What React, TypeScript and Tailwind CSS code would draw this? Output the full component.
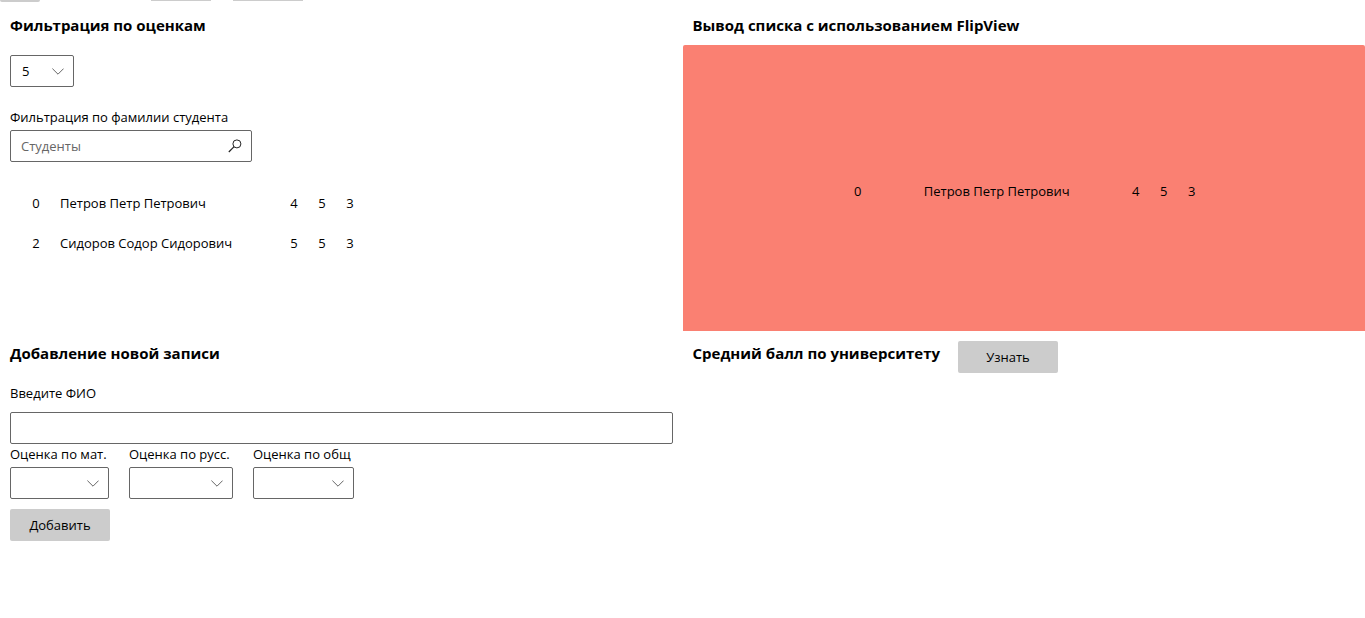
import { useState } from 'react';

type Student = { id: number; name: string; grades: number[] };

const students: Student[] = [
  { id: 0, name: 'Петров Петр Петрович', grades: [4, 5, 3] },
  { id: 2, name: 'Сидоров Содор Сидорович', grades: [5, 5, 3] },
];

const field = 'h-8 rounded-[2px] border border-[#666] bg-white outline-none';
const button = 'h-8 w-[100px] rounded-[2px] bg-[#ccc] text-center';
const heading = 'text-[15px] font-bold leading-5';

function GradeSelect({ id, label, value = '' }: { id: string; label?: string; value?: string }) {
  const [grade, setGrade] = useState(value);
  return (
    <div className="grid w-full grid-cols-1">
      <select
        id={id}
        aria-label={label}
        value={grade}
        onChange={(e) => setGrade(e.target.value)}
        className={`${field} col-start-1 row-start-1 w-full min-w-0 appearance-none pl-[11px]`}
      >
        <option value=""></option>
        <option>2</option>
        <option>3</option>
        <option>4</option>
        <option>5</option>
      </select>
      <svg
        viewBox="0 0 12 7"
        className="pointer-events-none col-start-1 row-start-1 mr-[10px] h-[7px] w-3 self-center justify-self-end"
        fill="none"
        stroke="#666"
      >
        <path d="M0.4 0.6 6 6.2 11.6 0.6" />
      </svg>
    </div>
  );
}

function LabeledGrade({ id, label, width }: { id: string; label: string; width: string }) {
  return (
    <div className={width}>
      <label htmlFor={id} className="block h-[23px] whitespace-nowrap leading-5">
        {label}
      </label>
      <GradeSelect id={id} />
    </div>
  );
}

function StudentTable({ rows, centered = false }: { rows: Student[]; centered?: boolean }) {
  return (
    <table className="table-fixed border-collapse">
      <tbody>
        {rows.map((s) => (
          <tr key={s.id} className="h-10">
            <td className="w-7 text-center">{s.id}</td>
            <td className={centered ? 'w-[250px] text-center' : 'w-[230px] pl-[10px]'}>{s.name}</td>
            {s.grades.map((g, i) => (
              <td key={i} className="w-7 text-center">
                {g}
              </td>
            ))}
          </tr>
        ))}
      </tbody>
    </table>
  );
}

export default function App() {
  const [query, setQuery] = useState('');
  const [name, setName] = useState('');

  return (
    <main className="grid min-h-screen grid-cols-2 grid-rows-[auto_1fr] bg-white font-['Open_Sans','Noto_Sans',sans-serif] text-[13px] leading-5 text-black">
      <section className="flex flex-col">
        <div className="flex h-[2px] items-start">
          <div className="h-[2px] w-10 rounded-b-[2px] bg-[#ccc]" />
          <div className="ml-[111px] h-px w-[60px] bg-[#ccc]" />
          <div className="ml-[22px] h-px w-[70px] bg-[#ccc]" />
        </div>
        <div className="px-[10px] pt-[13px]">
          <h2 className={heading}>Фильтрация по оценкам</h2>
          <div className="mt-5 w-16">
            <GradeSelect id="filter" label="Оценка" value="5" />
          </div>
          <label htmlFor="search" className="mt-5 block h-[23px] leading-5">
            Фильтрация по фамилии студента
          </label>
          <div className={`${field} flex w-[242px] items-center pl-[10px] pr-[9px]`}>
            <input
              id="search"
              value={query}
              onChange={(e) => setQuery(e.target.value)}
              placeholder="Студенты"
              className="min-w-0 flex-1 bg-transparent outline-none placeholder:text-[#666]"
            />
            <button aria-label="Найти" className="h-[14px] w-[14px]">
              <svg viewBox="0 0 14 14" className="h-[14px] w-[14px]" fill="none" stroke="#222">
                <circle cx="8.9" cy="4.9" r="4" />
                <path d="M6.1 7.7 0.8 13" strokeWidth="1.2" />
              </svg>
            </button>
          </div>
          <div className="mt-[21px] pl-3">
            <StudentTable rows={students} />
          </div>
        </div>
      </section>

      <section className="flex flex-col">
        <h2 className={`${heading} px-[10px] pb-[10px] pt-[15px]`}>
          Вывод списка с использованием FlipView
        </h2>
        <div className="flex h-[286px] items-center justify-center rounded-t-[2px] bg-[#fa8072] pl-[2px] pt-[6px]">
          <StudentTable rows={students.slice(0, 1)} centered />
        </div>
      </section>

      <section className="px-[10px] pt-3">
        <h2 className={heading}>Добавление новой записи</h2>
        <label htmlFor="fio" className="mt-5 block leading-5">
          Введите ФИО
        </label>
        <input
          id="fio"
          value={name}
          onChange={(e) => setName(e.target.value)}
          className={`${field} mt-[9px] block w-full px-[10px]`}
        />
        <div className="flex gap-5">
          <LabeledGrade id="math" label="Оценка по мат." width="w-[99px]" />
          <LabeledGrade id="rus" label="Оценка по русс." width="w-[104px]" />
          <LabeledGrade id="soc" label="Оценка по общ" width="w-[101px]" />
        </div>
        <button className={`${button} mt-[10px]`}>Добавить</button>
      </section>

      <section className="flex items-start gap-[18px] px-[10px] pt-[10px]">
        <h2 className={`${heading} pt-[2px]`}>Средний балл по университету</h2>
        <button className={button}>Узнать</button>
      </section>
    </main>
  );
}
